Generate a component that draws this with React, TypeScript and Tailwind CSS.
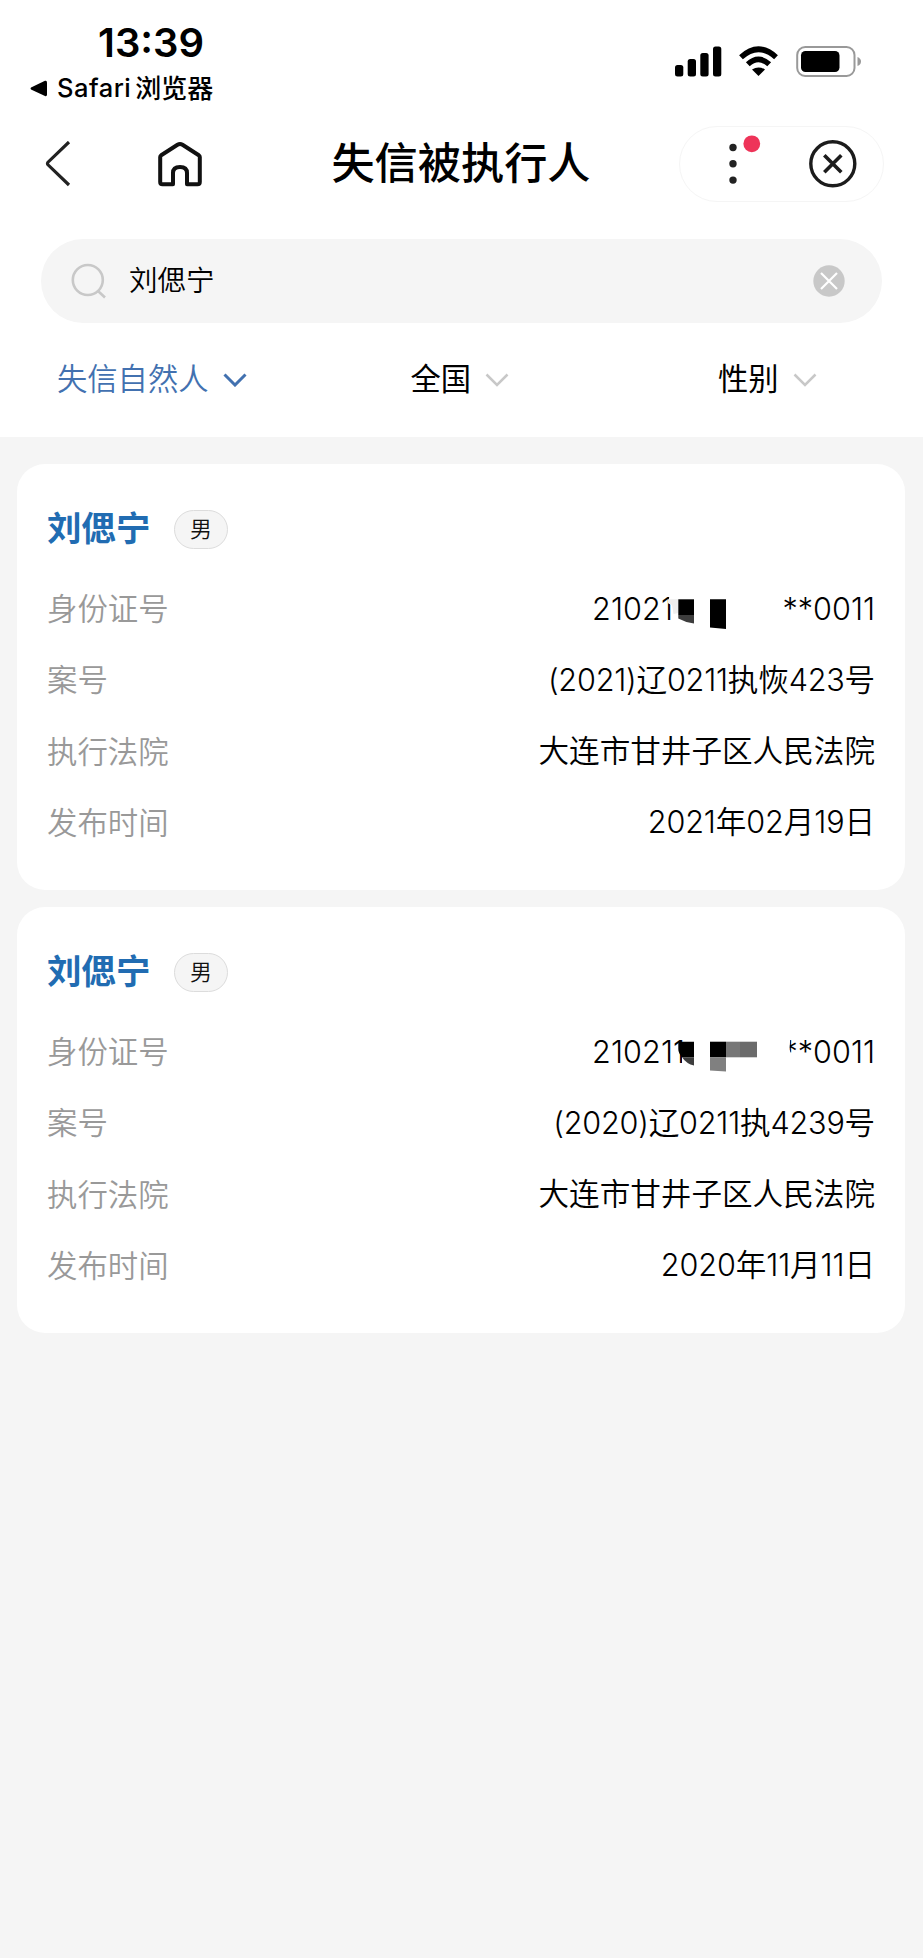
import React from "react";

type RecordItem = {
  name: string;
  gender: string;
  idHead: string;
  idTail: string;
  mask: React.ReactNode;
  caseNo: string;
  court: string;
  date: string;
};

/* Mosaic blocks laid over the hidden digits; the box is 281 x 60 with the text centred at y = 30. */
const MaskOne = () => (
  <svg className="absolute left-[1px] top-0" width="281" height="60" viewBox="0 0 281 60" fill="none">
    <path d="M76 14H88V46H84V34L79 35V27L74 24Z" fill="#fff" />
    <path d="M74 20.300H84.300V34L79.500 35L78 26L74 24Z" fill="#ededed" />
    <path d="M84.300 20.300H100V36H84.300Z" fill="#000" />
    <path d="M84.300 36H100V44.500Q91 43.300 84.300 39.500Z" fill="#3d3d3d" />
    <path d="M116 20.300H132V50L116 48.500Z" fill="#000" />
  </svg>
);

const MaskTwo = () => (
  <svg className="absolute left-[1px] top-0" width="281" height="60" viewBox="0 0 281 60" fill="none">
    <path d="M88 33L96 43V46H88Z" fill="#fff" />
    <path d="M84.300 19.700H100V35.300H88Q84.300 31 84.300 27Z" fill="#000" />
    <path d="M88 35.300H100V43.500Q92.500 42 88 35.300Z" fill="#3d3d3d" />
    <path d="M116 19.700H132V35.300H116Z" fill="#000" />
    <path d="M132 19.700H146V35.300H132Z" fill="#777" />
    <path d="M146 19.700H163V35.300H146Z" fill="#6b6b6b" />
    <path d="M116 35.300H132V49.500L116 48.500Z" fill="#808080" />
    <path d="M186 13H196.500L195.500 27L198 36H186Z" fill="#fff" />
  </svg>
);

const records: RecordItem[] = [
  {
    name: "刘偲宁",
    gender: "男",
    idHead: "21021",
    idTail: "**0011",
    mask: <MaskOne />,
    caseNo: "(2021)辽0211执恢423号",
    court: "大连市甘井子区人民法院",
    date: "2021年02月19日",
  },
  {
    name: "刘偲宁",
    gender: "男",
    idHead: "210211",
    idTail: "**0011",
    mask: <MaskTwo />,
    caseNo: "(2020)辽0211执4239号",
    court: "大连市甘井子区人民法院",
    date: "2020年11月11日",
  },
];

function Row({ label, children }: { label: string; children: React.ReactNode }) {
  return (
    <div className="flex h-[71.2px] items-center justify-between whitespace-nowrap">
      <span className="pt-[3px] text-[30.4px] font-[350] text-[#999]">{label}</span>
      <span className="text-[30.6px] font-[350] text-black">{children}</span>
    </div>
  );
}

function Card({ item }: { item: RecordItem }) {
  return (
    <section className="h-[426px] rounded-[28px] bg-white pl-[30px] pr-[30px] pt-[37px]">
      <div className="flex h-14 items-center">
        <h2 className="w-[127px] text-[34.5px] font-bold text-[#216cb2]">{item.name}</h2>
        <span className="flex h-[39px] w-[54px] items-center justify-center rounded-full border border-[#dcdcdc] bg-[#f5f5f5] text-[22px] font-[350] text-[#111]">
          {item.gender}
        </span>
      </div>
      <div className="pt-[16px]">
        <Row label="身份证号">
          <span className="relative flex h-[60px] w-[282px] items-center justify-between">
            <span className="-ml-[1px] tracking-[0.1px]">{item.idHead}</span>
            <span>{item.idTail}</span>
            {item.mask}
          </span>
        </Row>
        <Row label="案号">
          <span className="tracking-[-0.2px]">{item.caseNo}</span>
        </Row>
        <Row label="执行法院">{item.court}</Row>
        <Row label="发布时间">
          <span className="tracking-[-0.1px]">{item.date}</span>
        </Row>
      </div>
    </section>
  );
}

function Chevron({ className }: { className: string }) {
  return (
    <svg className={className} width="24" height="14" viewBox="0 0 24 14" fill="none" stroke="currentColor">
      <path d="M1.500 1.500L12 12L22.500 1.500" />
    </svg>
  );
}

function StatusBar() {
  return (
    <div className="flex h-[112px] items-start justify-between">
      <div className="pl-[30px] pt-[19px]">
        <div className="pl-[68px] text-[40px] font-semibold leading-[48px]">13:39</div>
        <div className="mt-[5px] flex h-8 items-center text-[25.500px] font-medium">
          <svg width="17" height="17" viewBox="0 0 17 17">
            <path d="M1 7.500L15 .8Q17 .3 17 2.500V14.500Q17 16.700 15 16L1 9.500Q0 8.500 1 7.500Z" />
          </svg>
          <span className="ml-[10px] tracking-[0.5px]">Safari</span>
          <span className="ml-[4px] text-[26px]">浏览器</span>
        </div>
      </div>
      <svg className="mt-[44px] mr-[61px]" width="187" height="34" viewBox="675 44 187 34" fill="none">
        <g fill="#000">
          <rect x="675" y="65" width="8.300" height="11.500" rx="2.500" />
          <rect x="687.700" y="59" width="8.300" height="17.500" rx="2.500" />
          <rect x="700.300" y="53" width="8.300" height="23.500" rx="2.500" />
          <rect x="713" y="46.500" width="8.300" height="30" rx="2.500" />
          <path d="M752 69.500Q758.500 65.500 765 69.500L758.500 76Z" />
        </g>
        <path d="M741 57.200Q758.500 41.200 776 57.200" stroke="#000" strokeWidth="5.600" />
        <path d="M747.800 64.300Q758.500 54.500 769.200 64.300" stroke="#000" strokeWidth="5.600" />
        <rect x="797.200" y="47" width="57.300" height="29" rx="8" stroke="#999" strokeWidth="2" />
        <rect x="801" y="51" width="38.500" height="21" rx="4.500" fill="#000" />
        <path d="M857.500 57Q861 58.500 861 61.500Q861 64.500 857.500 66Z" fill="#999" />
      </svg>
    </div>
  );
}

function NavBar() {
  return (
    <div className="grid h-[104px] grid-cols-[1fr_auto_1fr] items-center">
      <div className="flex items-center pl-[45px]">
        <svg width="26" height="46" viewBox="45 141 26 46" fill="none" stroke="#222" strokeWidth="3.200">
          <path d="M69 142L48 162.200Q47 163.500 48 164.800L69 185" />
        </svg>
        <svg className="ml-[86px]" width="46" height="46" viewBox="157 140 46 46" fill="none" stroke="#111" strokeWidth="4" strokeLinejoin="round">
          <path d="M160.200 156Q160.200 155 161.200 154.200L177.500 143.800Q180 142.300 182.500 143.800L198.800 154.200Q199.800 155 199.800 156V181Q199.800 183.300 197.500 183.300H187V172Q187 166 180 166Q173 166 173 172V183.300H162.500Q160.200 183.300 160.200 181Z" />
        </svg>
      </div>
      <h1 className="pr-[1px] text-[43.2px] font-medium leading-none">失信被执行人</h1>
      <div className="flex justify-end pr-[39px]">
        <div className="flex h-[76px] w-[205px] rounded-full border border-[#f5f5f5]">
          <svg width="203" height="74" viewBox="680.500 126.500 203 74" fill="none">
            <g fill="#222">
              <circle cx="733.500" cy="147" r="3.700" />
              <circle cx="733.500" cy="163.300" r="3.700" />
              <circle cx="733.500" cy="179.600" r="3.700" />
            </g>
            <circle cx="752.300" cy="143.300" r="8.400" fill="#ee3459" />
            <circle cx="833.300" cy="163.300" r="22" stroke="#1c1c1c" strokeWidth="3.400" />
            <path d="M824.800 154.800L841.800 171.800M841.800 154.800L824.800 171.800" stroke="#1c1c1c" strokeWidth="3.600" />
          </svg>
        </div>
      </div>
    </div>
  );
}

export default function App() {
  return (
    <div className="min-h-[1958px] w-[923px] bg-[#f5f5f5] font-['Inter','Noto_Sans_CJK_SC',sans-serif] text-black">
      <header className="h-[437px] bg-white">
        <StatusBar />
        <NavBar />
        <div className="px-[41px] pt-[23px]">
          <div className="flex h-[84px] items-center rounded-full bg-[#f5f5f5] pl-[30px] pr-[37px]">
            <svg width="36" height="36" viewBox="0 0 36 36" fill="none" stroke="#c8c8c8" strokeWidth="2.600">
              <circle cx="16.800" cy="17" r="15" />
              <path d="M27 28L34 34.500" />
            </svg>
            <span className="ml-[22px] flex-1 text-[28.500px] font-[350] text-black">刘偲宁</span>
            <svg width="32" height="32" viewBox="0 0 32 32">
              <circle cx="16" cy="16" r="15.700" fill="#c8c8c8" />
              <path d="M8 8L24 24M24 8L8 24" stroke="#fff" strokeWidth="2.200" />
            </svg>
          </div>
        </div>
        <div className="flex h-[114px] items-center text-[30.300px]">
          <div className="flex items-center pl-[57px] font-[350] text-[#4271b0]">
            失信自然人
            <Chevron className="ml-[15px] stroke-[3]" />
          </div>
          <div className="ml-[163px] flex items-center">
            全国
            <Chevron className="ml-[14px] text-[#c8c8c8] stroke-[2.5]" />
          </div>
          <div className="ml-[209px] flex items-center">
            性别
            <Chevron className="ml-[14px] text-[#c8c8c8] stroke-[2.5]" />
          </div>
        </div>
      </header>
      <main className="flex flex-col gap-[17px] pl-[17px] pr-[18px] pt-[27px]">
        {records.map((item, i) => (
          <Card key={i} item={item} />
        ))}
      </main>
    </div>
  );
}
